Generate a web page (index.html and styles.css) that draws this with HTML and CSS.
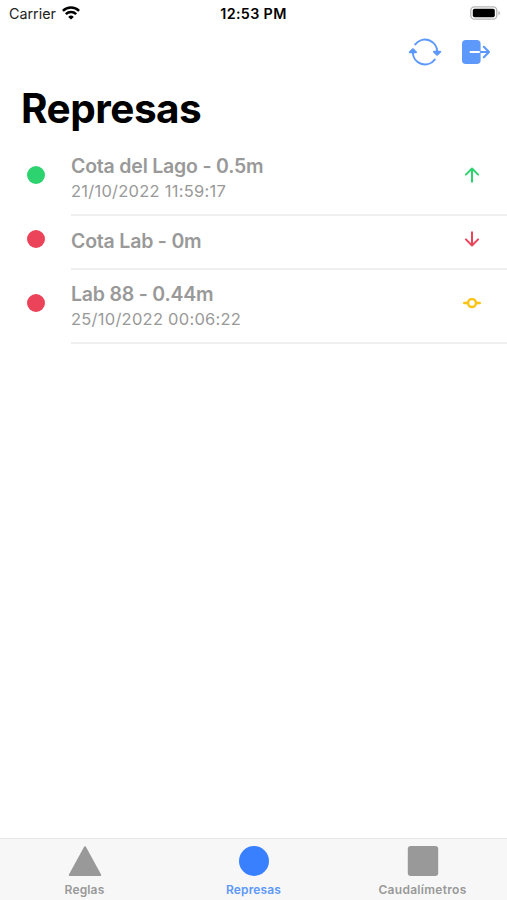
FILE: index.html
```html
<!doctype html>
<html lang="es">
  <head>
    <meta charset="UTF-8" />
    <meta name="viewport" content="width=device-width, initial-scale=1" />
    <title>Represas</title>
    <link rel="stylesheet" href="styles.css">
  </head>
  <body>
    <div class="app">
      <div class="status-bar">
        <div class="status-carrier">
          <span class="carrier-name">Carrier</span>
          <svg class="wifi" viewBox="0 0 18 14" fill="none" stroke="#000" stroke-width="2.5">
            <path d="M0.9 4.9a11.6 11.6 0 0 1 16.2 0" />
            <path d="M3.8 8.2a7.5 7.5 0 0 1 10.4 0" />
            <path d="M9 13.6L6.2 10.9a4 4 0 0 1 5.6 0z" fill="#000" stroke="none" />
          </svg>
        </div>
        <div class="status-time">12:53 PM</div>
        <svg class="battery" viewBox="0 0 31 14">
          <rect x="0.8" y="0.8" width="26" height="12.4" rx="3.6" fill="#fff" stroke="#b5b5b5" stroke-width="1.3" />
          <rect x="2.8" y="2.7" width="22" height="8.6" rx="1.8" fill="#000" />
          <path d="M28.4 4.8v4.4q1.6-.8 1.6-2.2t-1.6-2.2z" fill="#b5b5b5" />
        </svg>
      </div>

      <header class="toolbar">
        <button class="tool-btn" aria-label="Actualizar">
          <svg width="34" height="28" viewBox="0 0 34 28" fill="none" stroke="currentColor" stroke-width="2" stroke-linecap="round" stroke-linejoin="round">
            <path d="M7.3 6.4A12.2 12.2 0 0 1 29.2 14v1" />
            <path d="M26.7 21.6A12.2 12.2 0 0 1 4.8 14v-1" />
            <path d="M26 13.8h6.2l-3.1 3z" fill="currentColor" />
            <path d="M1.8 14.2H8l-3.1-3z" fill="currentColor" />
          </svg>
        </button>
        <button class="tool-btn" aria-label="Salir">
          <svg width="30" height="26" viewBox="0 0 30 26" fill="none" stroke-linecap="round" stroke-linejoin="round">
            <rect x="1" y="1" width="18.6" height="24" rx="3.8" fill="currentColor" />
            <path d="M9.5 13h10" stroke="#fff" stroke-width="2" />
            <path d="M19.6 13h8.4M22.8 7.8l5.2 5.2-5.2 5.2" stroke="currentColor" stroke-width="2.1" />
          </svg>
        </button>
      </header>

      <h1 class="title">Represas</h1>

      <main class="list">
        <div class="item">
          <span class="dot dot-success"></span>
          <div class="item-inner">
            <div class="item-label">
              <h2>Cota del Lago - 0.5m</h2>
              <p>21/10/2022 11:59:17</p>
            </div>
            <svg class="trend trend-up" viewBox="0 0 18 18">
              <path d="M9 15.8V2.8M2.9 8.6L9 2.5l6.1 6.1" />
            </svg>
          </div>
        </div>

        <div class="item item-single">
          <span class="dot dot-danger"></span>
          <div class="item-inner">
            <div class="item-label">
              <h2>Cota Lab - 0m</h2>
            </div>
            <svg class="trend trend-down" viewBox="0 0 18 18">
              <path d="M9 2.2v13M2.9 9.4L9 15.5l6.1-6.1" />
            </svg>
          </div>
        </div>

        <div class="item">
          <span class="dot dot-danger"></span>
          <div class="item-inner">
            <div class="item-label">
              <h2>Lab 88 - 0.44m</h2>
              <p>25/10/2022 00:06:22</p>
            </div>
            <svg class="trend trend-steady" viewBox="0 0 18 18">
              <circle cx="9" cy="9" r="4" />
              <path d="M1.2 9H5M13 9h3.8" />
            </svg>
          </div>
        </div>
      </main>

      <nav class="tabs">
        <a class="tab">
          <svg width="34" height="32" viewBox="0 0 34 32" fill="currentColor" stroke="currentColor" stroke-width="2" stroke-linejoin="round">
            <path d="M17 2.2L32.2 30H1.8z" />
          </svg>
          <span>Reglas</span>
        </a>
        <a class="tab tab-selected">
          <svg width="32" height="32" viewBox="0 0 32 32" fill="#3880ff">
            <circle cx="16" cy="16" r="15" />
          </svg>
          <span>Represas</span>
        </a>
        <a class="tab">
          <svg width="32" height="32" viewBox="0 0 32 32" fill="currentColor">
            <rect x="0.8" y="1" width="30.4" height="30" rx="3" />
          </svg>
          <span class="tab-wide">Caudalímetros</span>
        </a>
      </nav>
    </div>
  </body>
</html>
```

FILE: styles.css
```css
:root {
  --primary: #3880ff;
  --primary-light: #5d98fb;
  --success: #2dd36f;
  --danger: #eb445a;
  --warning: #f9c416;
  --medium: #999;
  --border: #efefef;
}

* {
  margin: 0;
  padding: 0;
  box-sizing: border-box;
}

body {
  font-family: "Inter", "Helvetica Neue", sans-serif;
  background-color: #fff;
  color: #000;
}

.app {
  display: flex;
  flex-direction: column;
  height: 100vh;
}

.status-bar {
  display: grid;
  grid-template-columns: 1fr auto 1fr;
  align-items: center;
  height: 27px;
  padding: 0 6px;
}

.status-carrier {
  display: flex;
  align-items: center;
  gap: 6px;
  padding-left: 3px;
}

.carrier-name {
  font-size: 14.3px;
  color: #222;
}

.wifi {
  width: 18px;
  height: 14px;
  margin-bottom: 2px;
}

.status-time {
  font-size: 14.3px;
  font-weight: 600;
  letter-spacing: 0.35px;
}

.battery {
  justify-self: end;
  width: 31px;
  height: 14px;
  margin-bottom: 1px;
}

.toolbar {
  display: flex;
  justify-content: flex-end;
  align-items: center;
  gap: 19px;
  height: 50px;
  padding-right: 16px;
}

.tool-btn {
  display: flex;
  border: none;
  background: none;
  color: var(--primary-light);
  cursor: pointer;
}

.title {
  height: 65px;
  padding: 7px 21px 0;
  font-size: 40.5px;
  font-weight: 700;
  line-height: 50px;
  letter-spacing: -0.5px;
}

.list {
  flex: 1;
}

.item {
  display: flex;
  height: 74px;
  padding-left: 27px;
}

.item-single {
  height: 54px;
}

.dot {
  flex: none;
  align-self: center;
  width: 18px;
  height: 18px;
  margin: 0 26px 8px 0;
  border-radius: 50%;
}

.dot-success {
  background-color: var(--success);
}

.dot-danger {
  background-color: var(--danger);
}

.item-inner {
  display: flex;
  flex: 1;
  justify-content: space-between;
  align-items: center;
  padding-right: 26px;
  border-bottom: 2px solid var(--border);
}

.item-label {
  color: var(--medium);
}

.item-label h2 {
  font-size: 19.5px;
  font-weight: 600;
  line-height: 26px;
  letter-spacing: -0.2px;
}

.item-label p {
  font-size: 16.5px;
  line-height: 24px;
  letter-spacing: 0.25px;
}

.trend {
  width: 18px;
  height: 18px;
  margin-bottom: 7px;
  fill: none;
  stroke-width: 2;
  stroke-linecap: round;
  stroke-linejoin: round;
}

.item-single .item-label {
  margin-bottom: 2px;
}

.trend-up {
  stroke: var(--success);
}

.trend-down {
  stroke: var(--danger);
}

.trend-steady {
  stroke: var(--warning);
  stroke-width: 2.4;
}

.tabs {
  display: grid;
  grid-template-columns: repeat(3, 1fr);
  height: 62px;
  background-color: #f7f7f7;
  border-top: 1px solid #e8e8e8;
}

.tab {
  display: flex;
  flex-direction: column;
  align-items: center;
  padding-top: 6px;
  color: var(--medium);
  font-size: 12px;
  font-weight: 600;
  line-height: 26px;
  letter-spacing: 0.15px;
}

.tab-wide {
  letter-spacing: 0.3px;
}

.tab-selected {
  color: var(--primary-light);
}
```
